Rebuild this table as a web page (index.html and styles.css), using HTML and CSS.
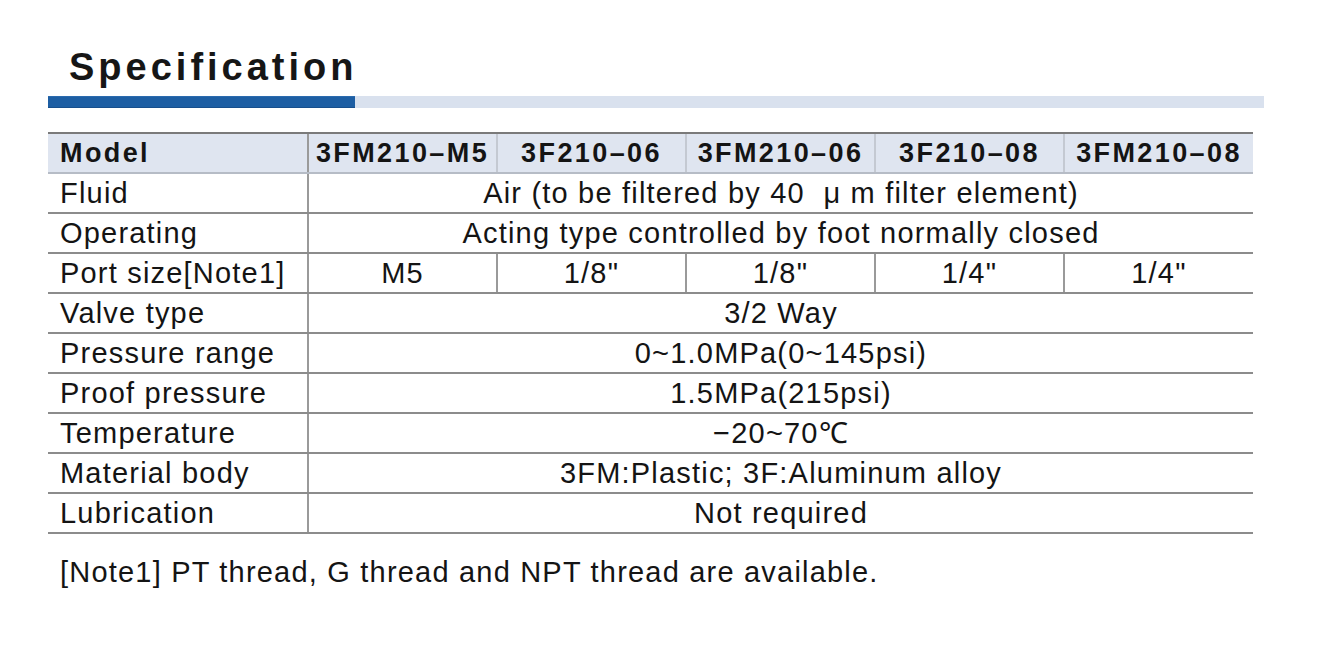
FILE: index.html
```html
<!DOCTYPE html>
<html>
<head>
<meta charset="utf-8">
<link rel="stylesheet" href="styles.css">
</head>
<body>
<div class="page">
  <h1 class="title">Specification</h1>
  <div class="rule"><div class="rule-dark"></div><div class="rule-light"></div></div>
  <table class="spec">
    <colgroup>
      <col class="c-label"><col class="c-val"><col class="c-val"><col class="c-val"><col class="c-val"><col class="c-val">
    </colgroup>
    <tr class="head">
      <th class="label">Model</th><th>3FM210–M5</th><th>3F210–06</th><th>3FM210–06</th><th>3F210–08</th><th>3FM210–08</th>
    </tr>
    <tr><td class="label">Fluid</td><td colspan="5">Air (to be filtered by 40 &nbsp;μ m filter element)</td></tr>
    <tr><td class="label">Operating</td><td colspan="5">Acting type controlled by foot normally closed</td></tr>
    <tr class="split"><td class="label">Port size[Note1]</td><td>M5</td><td>1/8"</td><td>1/8"</td><td>1/4"</td><td>1/4"</td></tr>
    <tr><td class="label">Valve type</td><td colspan="5">3/2 Way</td></tr>
    <tr><td class="label">Pressure range</td><td colspan="5">0~1.0MPa(0~145psi)</td></tr>
    <tr><td class="label">Proof pressure</td><td colspan="5">1.5MPa(215psi)</td></tr>
    <tr><td class="label">Temperature</td><td colspan="5">−20~70℃</td></tr>
    <tr><td class="label">Material body</td><td colspan="5">3FM:Plastic; 3F:Aluminum alloy</td></tr>
    <tr><td class="label">Lubrication</td><td colspan="5">Not required</td></tr>
  </table>
  <p class="note">[Note1] PT thread, G thread and NPT thread are available.</p>
</div>
</body>
</html>
```

FILE: styles.css
```css
html, body {
  margin: 0;
  padding: 0;
  background: #ffffff;
}
body {
  font-family: "Liberation Sans", Arial, sans-serif;
  color: #141414;
}
.page {
  padding: 0 0 0 48px;
  width: 1216px;
}
.title {
  margin: 0;
  padding: 42px 0 0 21px;
  height: 54px;
  font-size: 38px;
  line-height: 50px;
  font-weight: bold;
  letter-spacing: 4px;
  color: #161616;
}
.rule {
  display: flex;
  height: 12px;
}
.rule-dark {
  width: 307px;
  background: #1d5ea3;
  border-top: 1px solid #2a6aae;
  border-bottom: 1px solid #174f8c;
}
.rule-light {
  width: 909px;
  background: #d9e1ee;
}
.spec {
  margin-top: 24px;
  border-collapse: collapse;
  table-layout: fixed;
  width: 1205px;
}
.c-label { width: 260px; }
.c-val { width: 189px; }
.spec th, .spec td {
  height: 38px;
  padding: 0;
  text-align: center;
  font-size: 29px;
  line-height: 34px;
  letter-spacing: 1.2px;
  border-bottom: 2px solid #8c8c8c;
  border-left: 2px solid #9a9a9a;
  white-space: nowrap;
}
.spec .label {
  text-align: left;
  padding-left: 12px;
  border-left: none;
}
.head th {
  background: #dfe5f0;
  font-weight: bold;
  font-size: 27px;
  letter-spacing: 2.4px;
  border-top: 2px solid #7a7a7a;
  border-bottom: 2px solid #b6bcc6;
  border-left: 2px solid #c4c9d2;
  height: 38px;
}
.head th.label { border-left: none; }
.head th:nth-child(2) { border-left: 2px solid #9a9a9a; }
.note {
  margin: 22px 0 0 12px;
  font-size: 29px;
  letter-spacing: 1.2px;
  line-height: 32px;
}
```
